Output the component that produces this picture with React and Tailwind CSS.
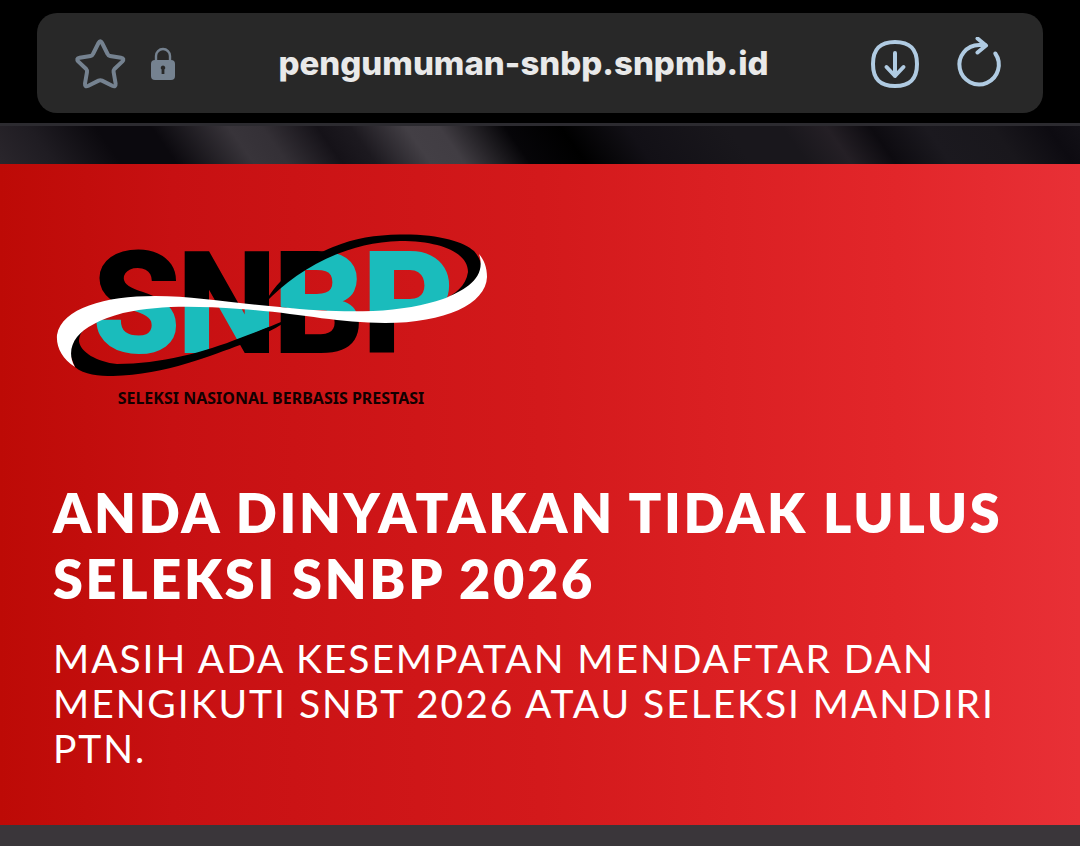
import React, { useState } from 'react';

const StarIcon = () => (
  <svg viewBox="0 0 52 52" className="h-[52px] w-[52px]" fill="none" stroke="#758290" strokeWidth="4" strokeLinejoin="round" aria-hidden="true">
    <path d="M24.5 5 Q26.3 1.5 28.1 5 L33.6 16 Q34.3 17.7 36 18 L47 19.7 Q51 20.4 48.2 23.6 L40.4 31 Q39.3 32.2 39.6 34 L41.6 45.5 Q42 49.6 38.2 47.8 L28 42.6 Q26.3 41.8 24.6 42.6 L14.4 47.8 Q10.6 49.6 11 45.5 L13 34 Q13.3 32.2 12.2 31 L4.4 23.6 Q1.6 20.4 5.6 19.7 L16.6 18 Q18.3 17.7 19 16 Z" />
  </svg>
);

const LockIcon = () => (
  <svg viewBox="0 0 26 34" className="h-[34px] w-[26px]" aria-hidden="true">
    <path d="M6 14V9a7 7 0 0 1 14 0v5" fill="none" stroke="#758290" strokeWidth="2.4" />
    <rect x="1" y="13" width="24" height="20" rx="4" fill="#758290" />
    <path d="M13 18.500a2.300 2.300 0 0 1 1.400 4.100V27h-2.800v-4.400A2.300 2.300 0 0 1 13 18.500z" fill="#282828" />
  </svg>
);

const DownloadIcon = () => (
  <svg viewBox="0 0 48 48" className="h-12 w-12" fill="none" stroke="#b0cbe2" strokeWidth="4" strokeLinecap="round" strokeLinejoin="round" aria-hidden="true">
    <path d="M24 2C39 2 46 9 46 24S39 46 24 46 2 39 2 24 9 2 24 2z" />
    <path d="M24 13v23M15.500 27l8.500 9 8.500-9" />
  </svg>
);

const ReloadIcon = () => (
  <svg viewBox="0 0 48 54" className="h-[54px] w-12" fill="none" stroke="#b0cbe2" strokeWidth="4" strokeLinecap="round" strokeLinejoin="round" aria-hidden="true">
    <path d="M40.300 16.500A19.700 19.700 0 1 1 24 8h6" />
    <path d="M22.500 1.500l8.500 7-8.500 7" />
  </svg>
);

const Logo = () => (
  <svg viewBox="53 210 442 180" className="h-[180px] w-[442px]" role="img" aria-label="SNBP">
    <defs>
      {/* letters are black, and teal where they sit inside the ribbon's loops */}
      <pattern id="letters" width="600" height="500" patternUnits="userSpaceOnUse">
        <rect width="600" height="500" fill="#000" />
        <path fill="#1abcbc" d="M75 345C85 310 130 302 200 303C240 304 260 307 276 310V324C250 336 200 354 150 367C110 374 70 372 75 345z" />
        <path fill="#1abcbc" d="M276 306V290C300 262 340 241 400 239C450 238 478 250 472 275C460 300 420 315 373 316C330 316 300 310 276 306z" />
      </pattern>
    </defs>
    <text x="92 177 273 362" y="353" fill="url(#letters)" className="font-['Roboto',sans-serif] text-[142px] font-black">
      SNBP
    </text>
    <path
      d="M75 367C84 375 99 376 113 376C165 375 215 354 240 345C262 336 280 326 295 316C268 328 255 332 240 338C205 352 160 364 117 364C97 362 80 352 79 341C79 336 81 332 85 329L72 340L69 352z"
      fill="#000"
    />
    <path
      d="M265 303C277 279 305 258 333 247C355 238 375 235 400 234.500C440 234 464 242 474 251C482 260 484 271 479 279C470 292 457 297 443 300C455 294 466 286 468 272C468 254 444 241 400 241C340 243 295 272 265 303z"
      fill="#000"
    />
    <path
      d="M75 367C62 359 56 347 57 335C62 308 105 296 155 296C195 296 230 303 280 307C315 311 345 312 373 311C400 310 425 305 443 299C465 290 487 278 479 254C484 260 487 267 487 277C486 304 445 323 385 323C335 323 300 313 240 309C195 306 160 305 123 313C100 319 84 328 77 337C70 346 69 357 75 367z"
      fill="#fff"
    />
  </svg>
);

const AddressBar = () => {
  const [url, setUrl] = useState('pengumuman-snbp.snpmb.id');

  return (
    <header className="border-b-[3px] border-[#2c2b30] bg-black px-[37px] pt-[13px] pb-2.5">
      <div className="flex h-[100px] items-center rounded-[20px] bg-[#282828] pt-0.5 pr-10 pl-[37px]">
        <button type="button" aria-label="Bookmark">
          <StarIcon />
        </button>
        <span className="ml-6">
          <LockIcon />
        </span>
        <input
          type="text"
          aria-label="Address"
          value={url}
          onChange={(e) => setUrl(e.target.value)}
          className="min-w-0 flex-1 bg-transparent text-center font-['Inter',sans-serif] text-[33px] font-extrabold text-[#e9e9e9] outline-none"
        />
        <button type="button" aria-label="Download">
          <DownloadIcon />
        </button>
        <button type="button" aria-label="Reload" className="ml-9">
          <ReloadIcon />
        </button>
      </div>
    </header>
  );
};

const App = () => {
  return (
    <div className="flex min-h-screen flex-col bg-[#3a363a]">
      <AddressBar />
      <div className="h-[38px] bg-[linear-gradient(55deg,#2a262c_0%,#1f1c22_5%,#0b090e_11%,#0b090e_16%,#38343a_23%,#343036_26%,#151218_31%,#1c191f_34%,#433f45_39%,#413d43_42%,#060508_48%,#000_53%,#121016_59%,#19171c_68%,#19171c_73%,#241f25_77%,#0d0b10_81%,#1b191f_86%,#19171c_92%,#0d0b11_97%,#121016_100%)]" />
      <main className="bg-[linear-gradient(to_right,#bd0a06_0%,#c71012_16%,#d3191b_50%,#e2262a_83%,#e83036_100%)] px-[53px] pt-[46px] pb-[54px] text-white">
        <div className="w-[442px]">
          <Logo />
          <p className="pr-1.5 text-center font-['Noto_Sans',sans-serif] text-base leading-4 font-bold text-[#120000]">
            SELEKSI NASIONAL BERBASIS PRESTASI
          </p>
        </div>
        <h1 className="mt-[74px] font-['Lato',sans-serif] text-[54px] leading-[66px] font-extrabold tracking-wider">
          ANDA DINYATAKAN TIDAK LULUS SELEKSI SNBP 2026
        </h1>
        <p className="mt-6 font-['Lato',sans-serif] text-[39px] leading-[45px] tracking-wider">
          MASIH ADA KESEMPATAN MENDAFTAR DAN MENGIKUTI SNBT 2026 ATAU SELEKSI MANDIRI PTN.
        </p>
      </main>
    </div>
  );
};

export default App;
